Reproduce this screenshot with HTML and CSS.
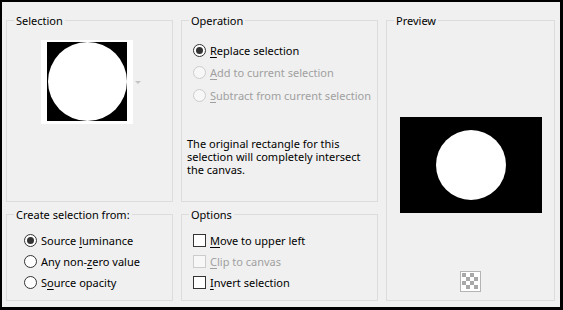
FILE: index.html
```html
<!DOCTYPE html>
<html lang="en">
<head>
    <meta charset="UTF-8">
    <title>Selection From Mask</title>
    <link rel="stylesheet" href="styles.css">
</head>
<body>
    <div class="dialog">
        <div class="group sel">
            <span class="group-title">Selection</span>
            <div class="thumb-row">
                <div class="thumb">
                    <div class="thumb-img"><div class="disc"></div></div>
                </div>
                <span class="drop-arrow"></span>
            </div>
        </div>

        <div class="group op">
            <span class="group-title">Operation</span>
            <div class="options op-list">
                <div class="row"><span class="radio on"></span><span><u>R</u>eplace selection</span></div>
                <div class="row off"><span class="radio"></span><span><u>A</u>dd to current selection</span></div>
                <div class="row off"><span class="radio"></span><span><u>S</u>ubtract from current selection</span></div>
            </div>
            <p class="note">The original rectangle for this selection will completely intersect the canvas.</p>
        </div>

        <div class="group prev">
            <span class="group-title">Preview</span>
            <div class="preview">
                <div class="preview-img"><div class="preview-disc"></div></div>
            </div>
            <!-- transparency toggle -->
            <svg class="checker" width="21" height="21" viewBox="0 0 21 21">
                <rect x="0.5" y="0.5" width="20" height="20" fill="#fff" stroke="#b4b4b4"/>
                <g fill="#a8a8a8">
                    <rect x="2" y="2" width="4" height="4"/>
                    <rect x="10" y="2" width="4" height="4"/>
                    <rect x="6" y="6" width="4" height="4"/>
                    <rect x="14" y="6" width="4" height="4"/>
                    <rect x="2" y="10" width="4" height="4"/>
                    <rect x="10" y="10" width="4" height="4"/>
                    <rect x="6" y="14" width="4" height="4"/>
                    <rect x="14" y="14" width="4" height="4"/>
                </g>
            </svg>
        </div>

        <div class="group src">
            <span class="group-title">Create selection from:</span>
            <div class="options src-list">
                <div class="row"><span class="radio on"></span><span>Source <u>l</u>uminance</span></div>
                <div class="row"><span class="radio"></span><span>Any non-<u>z</u>ero value</span></div>
                <div class="row"><span class="radio"></span><span>S<u>o</u>urce opacity</span></div>
            </div>
        </div>

        <div class="group opt">
            <span class="group-title">Options</span>
            <div class="options opt-list">
                <div class="row"><span class="check"></span><span><u>M</u>ove to upper left</span></div>
                <div class="row off"><span class="check"></span><span><u>C</u>lip to canvas</span></div>
                <div class="row"><span class="check"></span><span><u>I</u>nvert selection</span></div>
            </div>
        </div>
    </div>
</body>
</html>
```

FILE: styles.css
```css
body {
    margin: 0;
    font-family: "Noto Sans", "Open Sans", sans-serif;
    font-size: 11px;
    color: #000;
}
.dialog {
    width: 563px;
    height: 310px;
    box-sizing: border-box;
    border: 2px solid #000;
    border-right-width: 3px;
    border-bottom-width: 3px;
    background-color: #f0f0f0;
    padding: 11px 5px 6px 4px;
    display: grid;
    grid-template-columns: 167px 8px 197px 8px 169px;
    grid-template-rows: 189px 94px;
    row-gap: 5px;
    grid-template-areas:
        "sel . op . prev"
        "src . opt . prev";
}
.group {
    border: 1px solid #dcdcdc;
    margin-top: 7px;
    display: flex;
    flex-direction: column;
}
.sel { grid-area: sel; }
.op { grid-area: op; }
.prev { grid-area: prev; }
.src { grid-area: src; }
.opt { grid-area: opt; }
.group-title {
    display: block;
    width: fit-content;
    margin: -8px 0 0 7px;
    padding: 0 2px;
    line-height: 16px;
    background-color: #f0f0f0;
}

/* selection thumbnail */
.thumb-row {
    display: flex;
    align-items: center;
    margin: 11px 0 0 34px;
}
.thumb {
    width: 92px;
    height: 84px;
    box-sizing: border-box;
    padding: 2px 6px 3px 6px;
    background-color: #fff;
}
.thumb-img {
    height: 79px;
    background-color: #000;
    display: flex;
    align-items: center;
    justify-content: center;
}
.disc {
    width: 79px;
    height: 79px;
    border-radius: 50%;
    background-color: #fff;
}
.drop-arrow {
    width: 0;
    height: 0;
    margin-left: 2px;
    border-left: 3px solid transparent;
    border-right: 3px solid transparent;
    border-top: 3px solid #c4c4c4;
}

/* radio / checkbox rows */
.options {
    display: flex;
    flex-direction: column;
}
.op-list {
    margin: 10px 0 0 11px;
}
.op-list .row {
    height: 22.5px;
}
.src-list {
    margin: 7px 0 0 17px;
}
.opt-list {
    margin: 7px 0 0 11px;
}
.row {
    height: 21px;
    display: flex;
    align-items: center;
    white-space: nowrap;
}
.row.off {
    color: #a0a0a0;
}
.radio, .check {
    width: 13px;
    height: 13px;
    box-sizing: border-box;
    border: 1px solid #333;
    background-color: #fff;
    margin-right: 4px;
    flex-shrink: 0;
}
.radio {
    border-radius: 50%;
    display: flex;
    align-items: center;
    justify-content: center;
}
.radio.on::after {
    content: "";
    width: 7px;
    height: 7px;
    border-radius: 50%;
    background-color: #333;
}
.off .radio, .off .check {
    border-color: #cccccc;
    background-color: #f7f7f7;
}
u {
    text-underline-offset: 2px;
}
.note {
    margin: 30px 8px 0 5px;
    line-height: 13px;
}

/* preview */
.preview {
    margin-top: 88px;
    display: flex;
    justify-content: center;
}
.preview-img {
    width: 142px;
    height: 96px;
    background-color: #000;
    display: flex;
    align-items: center;
    justify-content: center;
}
.preview-disc {
    width: 70px;
    height: 70px;
    border-radius: 50%;
    background-color: #fff;
}
.checker {
    display: block;
    margin: 58px auto 0 auto;
}
```
